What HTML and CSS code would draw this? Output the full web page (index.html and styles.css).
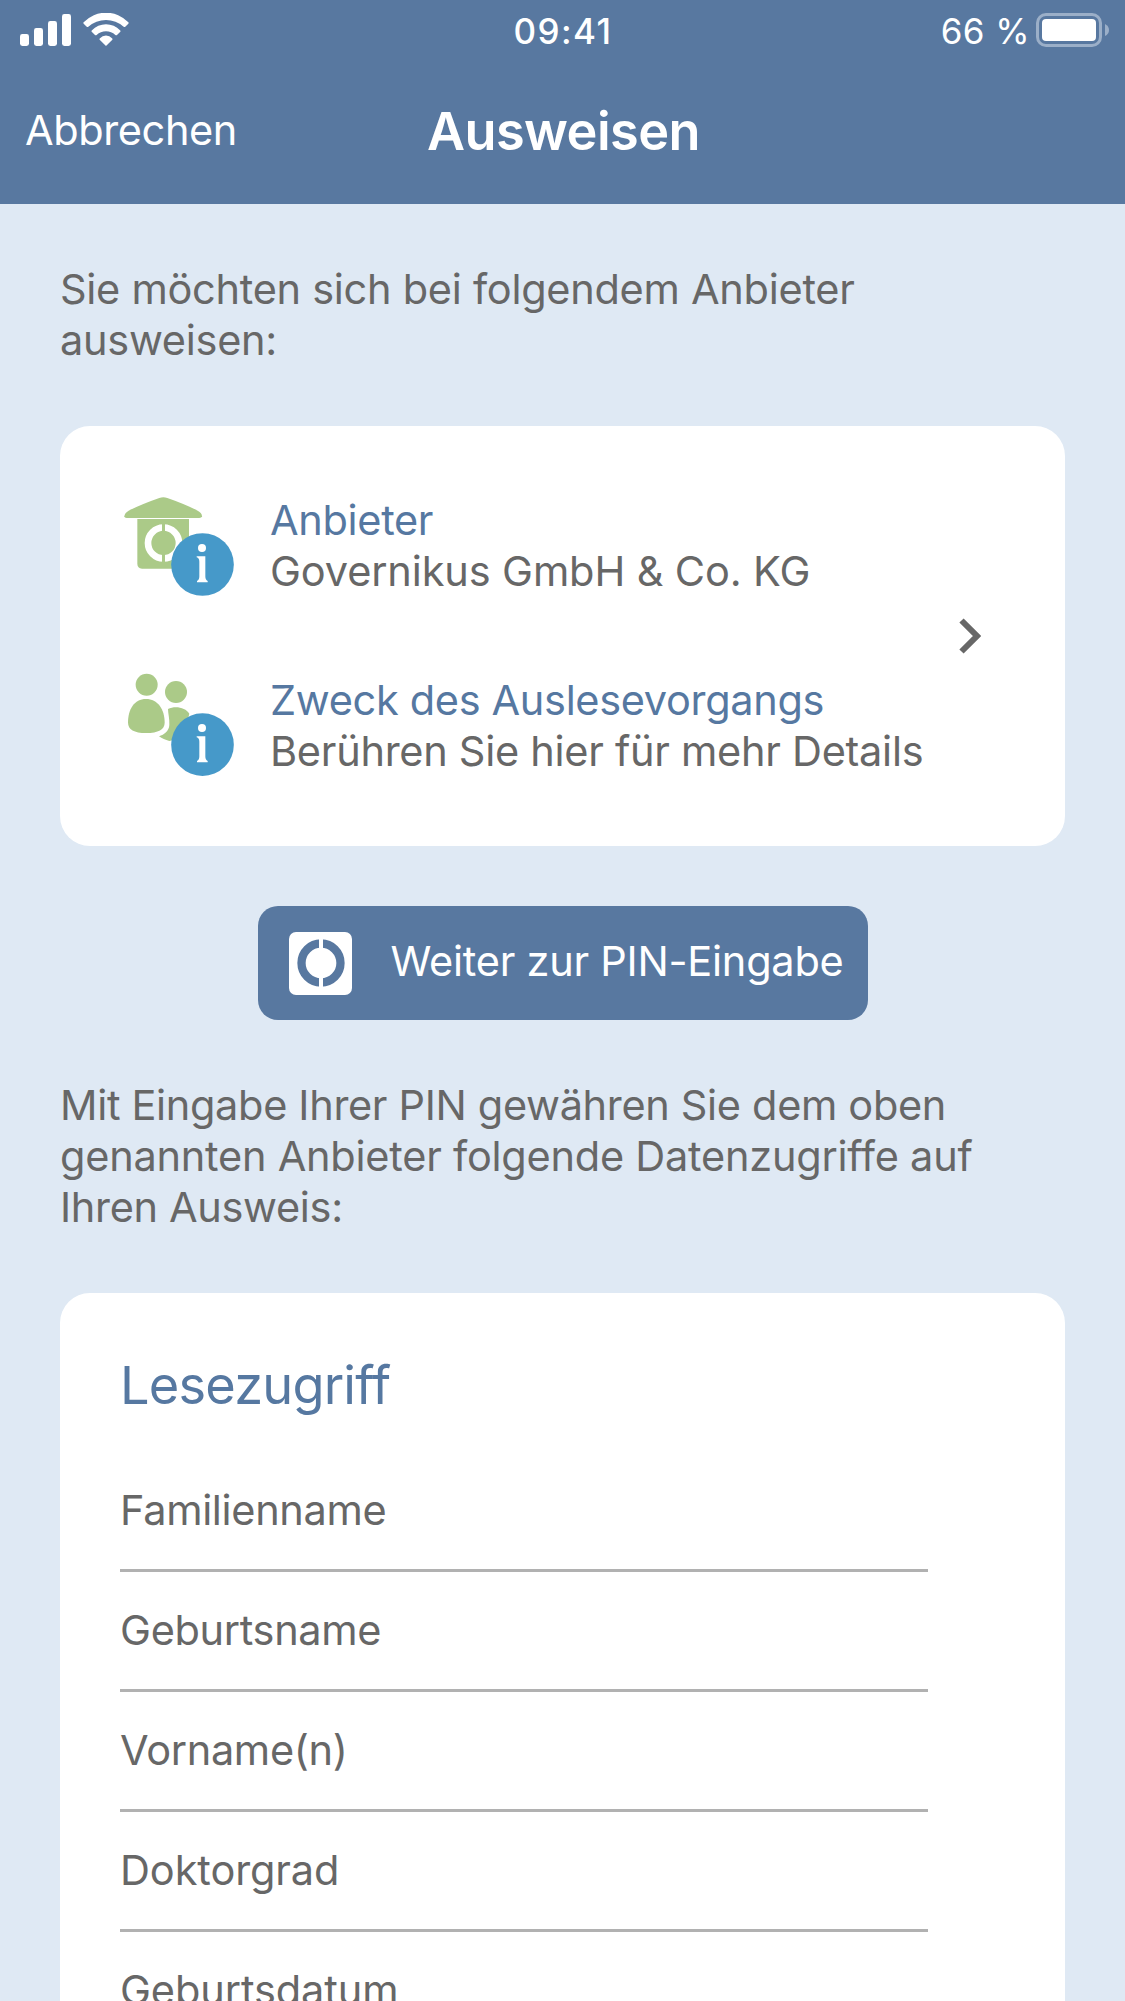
FILE: index.html
```html
<!DOCTYPE html>
<html lang="de">
<head>
<meta charset="utf-8">
<title>Ausweisen</title>
<link rel="stylesheet" href="styles.css">
</head>
<body>
<header class="header">
  <div class="status">
    <div class="status-left">
      <svg class="signal" viewBox="0 0 51 32" aria-hidden="true">
        <rect x="0" y="20" width="9" height="12" rx="2.4"/><rect x="14" y="14" width="9" height="18" rx="2.4"/><rect x="28" y="7" width="9" height="25" rx="2.4"/><rect x="42" y="0" width="9" height="32" rx="2.4"/>
      </svg>
      <svg class="wifi" viewBox="249 39 138 99" aria-hidden="true">
        <path d="M251 67A92 92 0 0 1 385 67Q387 69 385 71L375 81Q373 82 371 80A80 80 0 0 0 265 80Q263 82 261 81L251 71Q249 69 251 67Z"/>
        <path d="M276 91A57 57 0 0 1 360 91Q363 93 361 95L351 105Q349 107 346 105A41 41 0 0 0 290 105Q287 107 285 105L275 95Q273 93 276 91Z"/>
        <path d="M300 115A24 24 0 0 1 336 115Q339 117 337 119L318 138L299 119Q297 117 300 115Z"/>
      </svg>
    </div>
    <time class="clock">09:41</time>
    <div class="status-right">
      <span class="percent">66 %</span>
      <svg class="battery" viewBox="0 0 73 34" aria-hidden="true">
        <rect class="battery-shade" x="1.5" y="1.5" width="63" height="31" rx="8.5"/>
        <rect x="6" y="6" width="54" height="22" rx="4"/>
        <path class="battery-tip" d="M69 11Q73 13 73 17T69 23Z"/>
      </svg>
    </div>
  </div>
  <nav class="nav">
    <a class="cancel">Abbrechen</a>
    <h1 class="title">Ausweisen</h1>
  </nav>
</header>
<main class="content">
  <p class="text">Sie möchten sich bei folgendem Anbieter<br>ausweisen:</p>

  <section class="card provider">
    <div class="entries">
      <div class="entry">
        <svg class="entry-icon" viewBox="210 210 360 330" aria-hidden="true">
          <g class="green">
            <path d="M223 286Q224 276 236 269Q276 249 328 231Q340 227 352 231Q404 249 443 269Q456 276 456 286Q455 291 448 291H230Q223 291 223 286Z"/>
            <path d="M262 294H417V443H276Q262 441 262 428Z"/>
          </g>
          <circle class="ring" cx="340.500" cy="366" r="46.500"/>
          <rect class="green" x="336" y="300" width="9" height="132"/>
          <circle class="info" cx="457.500" cy="430.500" r="94"/>
          <circle class="white" cx="456" cy="381" r="12"/>
          <path class="white" d="M440 406H466V466Q466 477 473 480V484H441V480Q448 477 448 466V422Q448 411 440 409Z"/>
        </svg>
        <div class="entry-text">
          <div class="label">Anbieter</div>
          <div class="wide">Governikus GmbH &amp; Co. KG</div>
        </div>
      </div>
      <div class="entry">
        <svg class="entry-icon" viewBox="210 90 360 330" aria-hidden="true">
          <g class="green">
            <circle cx="290" cy="131" r="33"/>
            <circle cx="378" cy="153" r="33"/>
            <path d="M288 174C323 174 344 205 344 245C344 265 325 276 288 276C252 276 234 265 234 245C234 205 253 174 288 174Z"/>
            <path d="M354 204C375 193 407 199 418 218L400 290L358 300C346 297 336 293 327 286C343 281 357 270 358 252C359 233 354 218 354 204Z"/>
          </g>
          <circle class="info" cx="457.500" cy="311" r="94"/>
          <circle class="white" cx="456" cy="261" r="12"/>
          <path class="white" d="M440 286H466V346Q466 357 473 360V364H441V360Q448 357 448 346V302Q448 291 440 289Z"/>
        </svg>
        <div class="entry-text">
          <div class="label">Zweck des Auslesevorgangs</div>
          <div>Berühren Sie hier für mehr Details</div>
        </div>
      </div>
    </div>
    <svg class="chevron" viewBox="0 0 22 36" aria-hidden="true"><path d="M2.500 2.500L18 18L2.500 33.500"/></svg>
  </section>

  <button class="button" type="button">
    <svg class="button-icon" viewBox="0 0 63 63" aria-hidden="true">
      <rect class="white" width="63" height="63" rx="7"/>
      <circle cx="32" cy="31" r="19.500"/>
      <rect class="white" x="30" y="5" width="4" height="52"/>
    </svg>
    <span>Weiter zur PIN-Eingabe</span>
  </button>

  <p class="text access">Mit Eingabe Ihrer PIN gewähren Sie dem oben<br><span class="second-line">genannten Anbieter folgende Datenzugriffe auf</span><br>Ihren Ausweis:</p>

  <section class="card rights">
    <h2 class="heading">Lesezugriff</h2>
    <ul class="list">
      <li>Familienname</li>
      <li>Geburtsname</li>
      <li>Vorname(n)</li>
      <li class="loose">Doktorgrad</li>
      <li class="loose">Geburtsdatum</li>
    </ul>
  </section>
</main>
</body>
</html>
```
FILE: styles.css
```css
* { box-sizing: border-box; }

html, body { height: 2001px; overflow: hidden; }

body {
  margin: 0;
  display: flex;
  flex-direction: column;
  background: #dfe9f4;
  color: #676767;
  font: 400 41.5px/51px Inter, sans-serif;
  letter-spacing: -0.28px;
}

svg { display: block; flex: none; }
h1, h2, p, ul { margin: 0; padding: 0; }

.header {
  flex: none;
  height: 204px;
  background: #5878a0;
  color: #fff;
}

.status {
  display: grid;
  grid-template-columns: 1fr auto 1fr;
  height: 60px;
  padding: 0 16px 0 20px;
  font-size: 35px;
  line-height: 44px;
  fill: #fff;
}
.status-left { display: flex; gap: 12px; }
.signal { width: 51px; height: 32px; margin-top: 14px; }
.wifi { width: 46px; height: 33px; margin-top: 13px; }
.clock { padding: 9px 3px 0 0; font-weight: 500; letter-spacing: 1.4px; }
.status-right { display: flex; justify-content: flex-end; gap: 6px; }
.percent { padding-top: 9px; letter-spacing: 0.4px; }
.battery { width: 73px; height: 34px; margin-top: 13px; }
.battery-shade { fill: none; stroke: #9bafc8; stroke-width: 3; }
.battery-tip { fill: #9bafc8; }

.nav {
  display: grid;
  grid-template-columns: 1fr auto 1fr;
  align-items: start;
  padding: 39px 23px 0 25px;
}
.cancel { padding-top: 6px; letter-spacing: -0.4px; }
.title { font-size: 52.3px; line-height: 64px; font-weight: 600; letter-spacing: -0.6px; }

.content {
  flex: none;
  display: flex;
  flex-direction: column;
  gap: 60px;
  height: 1797px;
  padding: 60px 60px 0;
}
.access { letter-spacing: -0.33px; }
.second-line { letter-spacing: -0.24px; }

.card { background: #fff; border-radius: 30px; }

.provider {
  display: flex;
  align-items: center;
  justify-content: space-between;
  flex: none;
  height: 420px;
  padding: 0 84px 0 60px;
}
.entries { display: flex; flex-direction: column; gap: 70px; }
.entry { display: flex; align-items: center; gap: 30px; white-space: nowrap; }
.entry-icon { width: 120px; height: 110px; }
.label { color: #5678a1; letter-spacing: -0.33px; }
.wide { letter-spacing: -0.13px; }
.green { fill: #abca88; }
.info { fill: #4699c9; }
.white { fill: #fff; stroke: none; }
.ring { fill: none; stroke: #fff; stroke-width: 20; }
.chevron { width: 22px; height: 36px; fill: none; stroke: #676767; stroke-width: 6; }

.button {
  display: flex;
  align-items: center;
  align-self: center;
  flex: none;
  gap: 39px;
  width: 610px;
  height: 114px;
  padding: 0 0 0 31px;
  border: 0;
  border-radius: 20px;
  background: #5878a0;
  color: #fff;
  font: inherit;
  letter-spacing: -0.24px;
  white-space: nowrap;
}
.button span { padding-bottom: 4px; }
.button-icon { width: 63px; height: 63px; fill: none; stroke: #5878a0; stroke-width: 8.3; }

.rights {
  flex: 1;
  min-height: 0;
  padding: 60px 60px 0;
  border-radius: 30px 30px 0 0;
}
.heading {
  color: #5678a1;
  font-size: 52.3px;
  line-height: 64px;
  font-weight: 400;
  letter-spacing: -0.8px;
}
.list { width: 808px; margin-top: 35px; list-style: none; }
.list li { height: 120px; padding-top: 33px; border-bottom: 3px solid #b1b1b1; letter-spacing: -0.33px; }
.list .loose { letter-spacing: -0.1px; }
```
